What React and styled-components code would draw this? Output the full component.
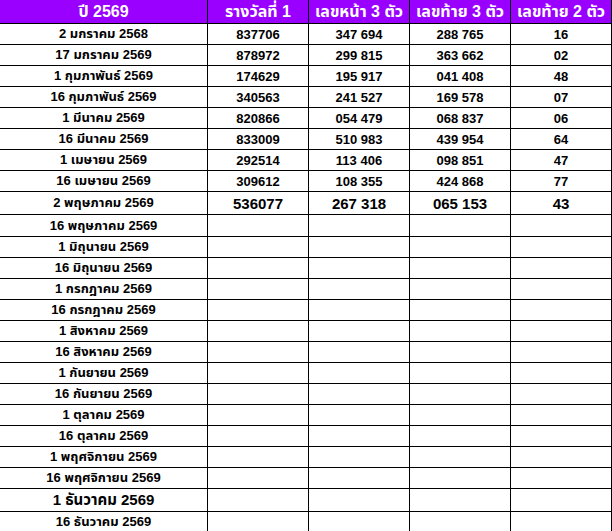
import React from "react";
import styled, { createGlobalStyle } from "styled-components";

const GlobalStyle = createGlobalStyle`
  html, body {
    margin: 0;
    padding: 0;
    background: #ffffff;
  }
  body {
    font-family: Tahoma, "Liberation Sans", "Noto Sans Thai", "Noto Sans", "DejaVu Sans", sans-serif;
    overflow: hidden;
  }
`;

const Table = styled.div`
  width: 612px;
  display: flex;
  flex-direction: column;
  gap: 1px;
  background: #000;
  border-right: 1px solid #000;
  box-sizing: border-box;
`;

const Row = styled.div`
  display: grid;
  grid-template-columns: 207px 100px 100px 100px 100px;
  gap: 1px;
  height: ${(p) => p.$h}px;
`;

const HeadCell = styled.div`
  background: #9900ff;
  color: #fff;
  font-weight: bold;
  font-size: 16px;
  display: flex;
  align-items: center;
  justify-content: center;
  white-space: nowrap;
  overflow: hidden;
`;

const Cell = styled.div`
  background: #fff;
  color: #000;
  font-weight: bold;
  font-size: ${(p) => (p.$big ? 15 : 13)}px;
  display: flex;
  align-items: center;
  justify-content: center;
  white-space: nowrap;
  overflow: hidden;
`;

const headers = ["ปี 2569", "รางวัลที่ 1", "เลขหน้า 3 ตัว", "เลขท้าย 3 ตัว", "เลขท้าย 2 ตัว"];

const results = [
  ["2 มกราคม 2568", "837706", "347 694", "288 765", "16"],
  ["17 มกราคม 2569", "878972", "299 815", "363 662", "02"],
  ["1 กุมภาพันธ์ 2569", "174629", "195 917", "041 408", "48"],
  ["16 กุมภาพันธ์ 2569", "340563", "241 527", "169 578", "07"],
  ["1 มีนาคม 2569", "820866", "054 479", "068 837", "06"],
  ["16 มีนาคม 2569", "833009", "510 983", "439 954", "64"],
  ["1 เมษายน 2569", "292514", "113 406", "098 851", "47"],
  ["16 เมษายน 2569", "309612", "108 355", "424 868", "77"],
];

const latest = ["2 พฤษภาคม 2569", "536077", "267 318", "065 153", "43"];

const upcoming = [
  "16 พฤษภาคม 2569",
  "1 มิถุนายน 2569",
  "16 มิถุนายน 2569",
  "1 กรกฎาคม 2569",
  "16 กรกฎาคม 2569",
  "1 สิงหาคม 2569",
  "16 สิงหาคม 2569",
  "1 กันยายน 2569",
  "16 กันยายน 2569",
  "1 ตุลาคม 2569",
  "16 ตุลาคม 2569",
  "1 พฤศจิกายน 2569",
  "16 พฤศจิกายน 2569",
  "1 ธันวาคม 2569",
  "16 ธันวาคม 2569",
];

export default function App() {
  return (
    <>
      <GlobalStyle />
      <Table>
        <Row $h={23}>
          {headers.map((h) => (
            <HeadCell key={h}>{h}</HeadCell>
          ))}
        </Row>
        {results.map((r) => (
          <Row $h={20} key={r[0]}>
            {r.map((v, i) => (
              <Cell key={i}>{v}</Cell>
            ))}
          </Row>
        ))}
        <Row $h={22}>
          <Cell>{latest[0]}</Cell>
          {latest.slice(1).map((v, i) => (
            <Cell $big key={i}>{v}</Cell>
          ))}
        </Row>
        {upcoming.map((d, idx) => {
          const big = d === "1 ธันวาคม 2569";
          return (
            <Row $h={big ? 22 : idx === 0 ? 21 : 20} key={d}>
              <Cell $big={big}>{d}</Cell>
              <Cell />
              <Cell />
              <Cell />
              <Cell />
            </Row>
          );
        })}
      </Table>
    </>
  );
}
